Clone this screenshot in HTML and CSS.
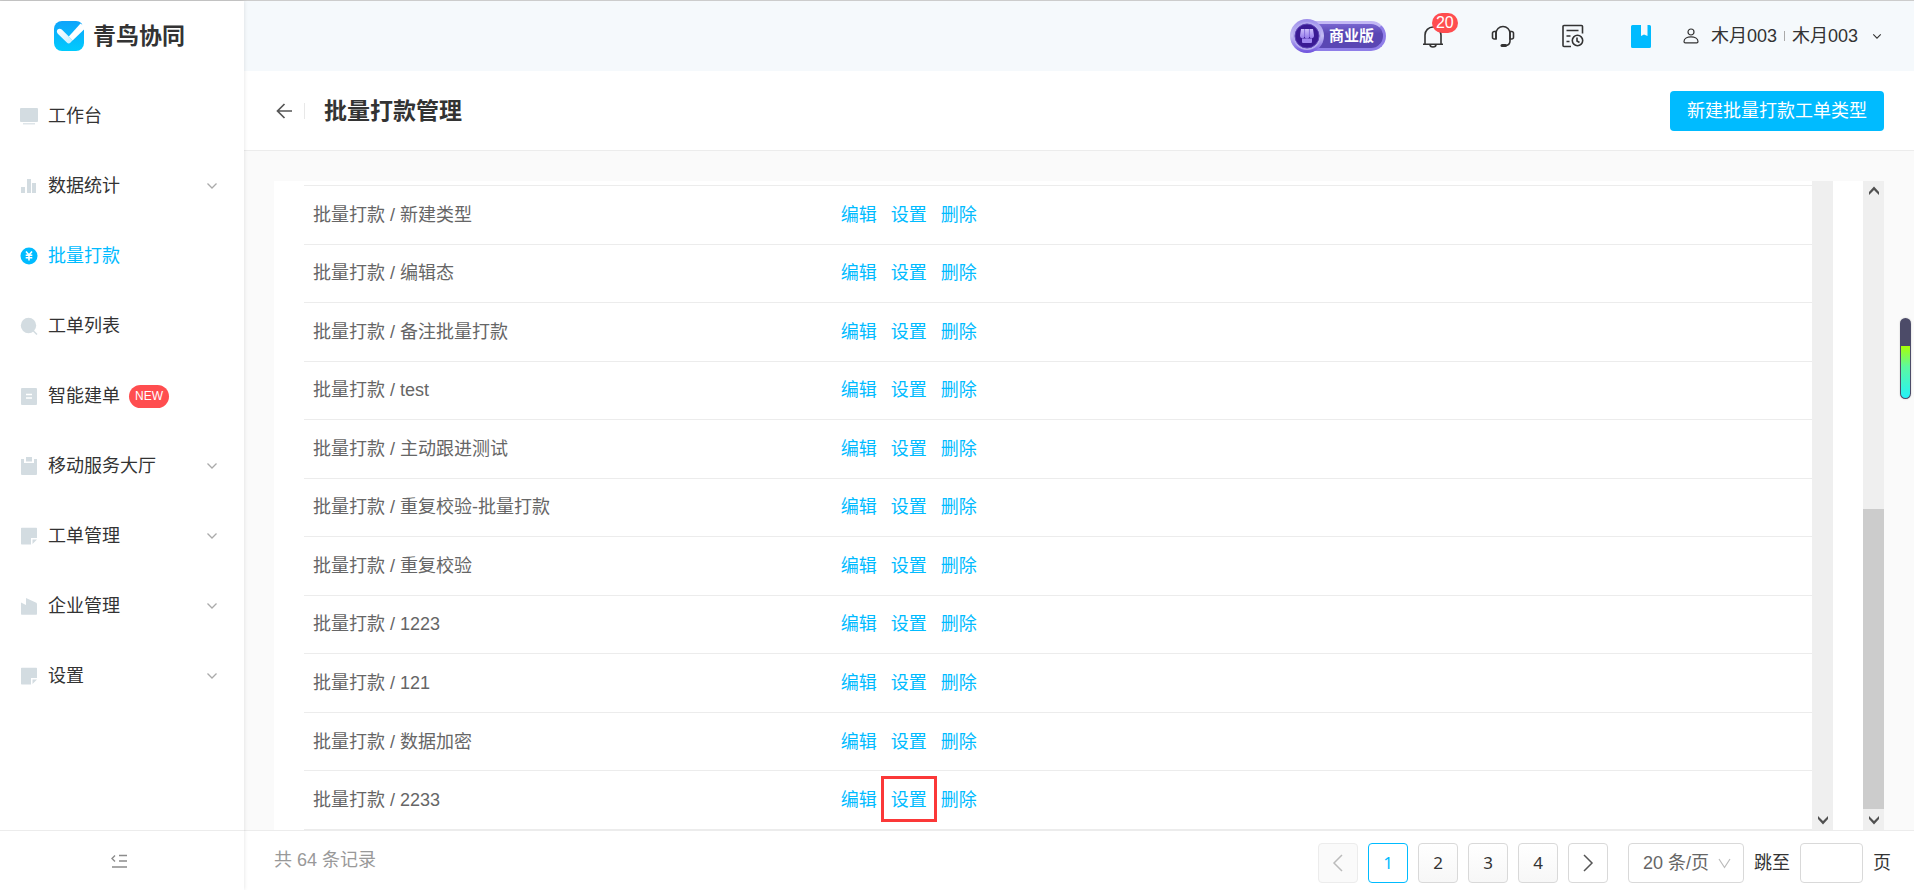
FILE: index.html
```html
<!DOCTYPE html>
<html lang="zh-CN">
<head>
<meta charset="utf-8">
<title>批量打款管理</title>
<link rel="stylesheet" href="styles.css">
</head>
<body>
<svg class="defs" aria-hidden="true">
  <symbol id="chev" viewBox="0 0 12 8"><path d="M1.500 1.500 6 6l4.500-4.500" fill="none" stroke="currentColor" stroke-width="1.300"/></symbol>
  <symbol id="note" viewBox="0 0 18 18"><path d="M1 1.500A.7.700 0 0 1 1.700.800h14.600a.7.700 0 0 1 .7.700V11h-6v6.500H1.700a.7.700 0 0 1-.7-.7z" fill="currentColor"/><path d="M12.500 12.500H17l-4.500 4.500z" fill="currentColor"/></symbol>
  <symbol id="sbdown" viewBox="0 0 12 10"><path d="M1 1v3l5 5.500L11 4V1L6 6z" fill="currentColor"/></symbol>
  <symbol id="sbup" viewBox="0 0 12 10"><path d="M1 9V6l5-5.500L11 6v3L6 4z" fill="currentColor"/></symbol>
</svg>
<div class="app">
  <aside class="sidebar">
    <div class="logo">
      <svg width="30" height="30" viewBox="0 0 30 30" aria-hidden="true">
        <defs>
          <linearGradient id="lg" x1="0" y1="0" x2="0" y2="1"><stop offset="0" stop-color="#0fa4fb"/><stop offset="1" stop-color="#00cbfd"/></linearGradient>
          <linearGradient id="lc" x1="0" y1="0" x2="1" y2="1"><stop offset="0" stop-color="#fff"/><stop offset="1" stop-color="#c8effe"/></linearGradient>
        </defs>
        <path d="M8 0h14c2 0 4 .8 5.300 2.200L30 7v15a8 8 0 0 1-8 8H8a8 8 0 0 1-8-8V8a8 8 0 0 1 8-8z" fill="url(#lg)"/>
        <path d="M26.500 2.500 14.800 15.500l3.800 4L30 8.500V5z" fill="#fff"/>
        <path d="M3.600 8.600c1.300-1.300 3-1.100 4.200 0l7 7 3.800 3.700-2 2.300c-1.200 1.200-2.600 1.200-3.800 0L3.800 12.700c-1.200-1.300-1.200-2.900-.2-4.100z" fill="url(#lc)"/>
      </svg>
      <span>青鸟协同</span>
    </div>
    <nav class="menu">
      <a href="#"><svg class="ic" viewBox="0 0 18 18"><rect x="0" y="1" width="18" height="14" rx="1" fill="currentColor"/><path d="M3 16h12v1.500H3z" fill="currentColor" opacity=".75"/></svg><span>工作台</span></a>
      <a href="#"><svg class="ic" viewBox="0 0 18 18"><path d="M1 10h4v6H1zM7 2h4v14H7zM12 6h4v10h-4z" fill="currentColor"/></svg><span>数据统计</span><svg class="chev"><use href="#chev"/></svg></a>
      <a href="#" class="on"><svg class="ic" viewBox="0 0 18 18"><circle cx="9" cy="9" r="8.500" fill="currentColor"/><path d="M6 4.500 9 8l3-3.500M5.700 8.300h6.600M5.700 10.800h6.600M9 8v5.500" fill="none" stroke="#fff" stroke-width="1.600"/></svg><span>批量打款</span></a>
      <a href="#"><svg class="ic" viewBox="0 0 18 18"><circle cx="8.500" cy="8.500" r="7.700" fill="currentColor"/><path d="m13 13.500 4 4" stroke="currentColor" stroke-width="1.500"/></svg><span>工单列表</span></a>
      <a href="#"><svg class="ic" viewBox="0 0 18 18"><rect x="1" y="1" width="16" height="17" rx="1" fill="currentColor"/><path d="M6 7.500h6M6 11h6" stroke="#fff" stroke-width="1.500"/></svg><span>智能建单</span><em>NEW</em></a>
      <a href="#"><svg class="ic" viewBox="0 0 18 18"><path d="M1 2h3v4h10V2h3v15a1 1 0 0 1-1 1H2a1 1 0 0 1-1-1z" fill="currentColor"/><rect x="6" y="0" width="6" height="4.500" fill="currentColor"/></svg><span>移动服务大厅</span><svg class="chev"><use href="#chev"/></svg></a>
      <a href="#"><svg class="ic"><use href="#note"/></svg><span>工单管理</span><svg class="chev"><use href="#chev"/></svg></a>
      <a href="#"><svg class="ic" viewBox="0 0 18 18"><path d="M1 5.500 6 8V1l10.300 4.700.7 1V17a.7.700 0 0 1-.7.700H1.700A.7.700 0 0 1 1 17z" fill="currentColor"/></svg><span>企业管理</span><svg class="chev"><use href="#chev"/></svg></a>
      <a href="#"><svg class="ic"><use href="#note"/></svg><span>设置</span><svg class="chev"><use href="#chev"/></svg></a>
    </nav>
    <button class="collapse" aria-label="收起菜单"><svg width="16" height="14" viewBox="0 0 16 14"><path d="M4 1.500 1 4.500l3 3M8 1.500h8M8 7h8M1 13h15" fill="none" stroke="currentColor" stroke-width="1.400"/></svg></button>
  </aside>

  <div class="main">
    <header class="topbar">
      <div class="edition">
        <svg width="34" height="36" viewBox="0 0 34 36" aria-hidden="true">
          <defs>
            <linearGradient id="eg" x1="0" y1="0" x2="0" y2="1"><stop offset="0" stop-color="#9d8eea"/><stop offset=".5" stop-color="#c4bdf4"/><stop offset="1" stop-color="#6d51dd"/></linearGradient>
            <linearGradient id="aw" x1="0" y1="0" x2="0" y2="1"><stop offset="0" stop-color="#cdbffb"/><stop offset="1" stop-color="#9379ea"/></linearGradient>
          </defs>
          <circle cx="17" cy="18" r="17" fill="url(#eg)"/><circle cx="17" cy="18" r="14" fill="#b3a9ef"/><circle cx="17" cy="18" r="12" fill="#3a1a94" stroke="#5b42b4"/>
          <path d="M11 11h12l1 6.500a2.300 2.300 0 0 1-4.600.8 2.400 2.400 0 0 1-4.800 0 2.300 2.300 0 0 1-4.600-.8z" fill="url(#aw)"/><path d="M14.600 11v7.500M19.400 11v7.500" stroke="#7a61d3" stroke-width=".8"/><path d="M12 20.500h10V24q0 1-1 1h-8q-1 0-1-1z" fill="#9f88f0"/>
        </svg>
        <span>商业版</span>
      </div>
      <button class="tool bell" aria-label="通知"><svg width="22" height="24" viewBox="0 0 22 24"><path d="M3 20V11a8 8 0 0 1 16 0v9M1 20.300h20M8 20.500c0 3.300 6 3.300 6 0" fill="none" stroke="currentColor" stroke-width="1.600"/></svg><b>20</b></button>
      <button class="tool" aria-label="客服"><svg width="24" height="24" viewBox="0 0 24 24"><g fill="none" stroke="currentColor" stroke-width="1.600"><path d="M5 15V9.500a7 7 0 0 1 14 0V17c0 3-2 4.500-5 4.500"/><path d="M5 7.500H3.500A1.800 1.800 0 0 0 1.500 9.500v3.500a1.800 1.800 0 0 0 2 2H5zM19 7.500h1.500a1.800 1.800 0 0 1 2 2V13a1.800 1.800 0 0 1-2 2H19z"/><path d="M11 21.600h3.500" stroke-width="3" stroke-linecap="round"/></g></svg></button>
      <button class="tool" aria-label="记录"><svg width="22" height="24" viewBox="0 0 22 24"><g fill="none" stroke="currentColor" stroke-width="1.600"><path d="M20.500 9.500V2.500a1 1 0 0 0-1-1H2a1 1 0 0 0-1 1v19a1 1 0 0 0 1 1h7M4.500 6.500h12M4.500 12h4M4.500 17.500h3"/><circle cx="15.500" cy="16.500" r="5.200"/><path d="M15 13.500v3.500l2.500 1.500"/></g></svg></button>
      <button class="tool book" aria-label="帮助手册"><svg width="20" height="23" viewBox="0 0 20 23"><path d="M1.500 0H10v11l3-1.500 3.500 1.500V0h2A1.500 1.500 0 0 1 20 1.500v20a1.500 1.500 0 0 1-1.500 1.500h-17A1.500 1.500 0 0 1 0 21.500v-20A1.500 1.500 0 0 1 1.500 0z" fill="currentColor"/></svg></button>
      <button class="user"><svg width="16" height="16" viewBox="0 0 16 16"><g fill="none" stroke="currentColor" stroke-width="1.200"><circle cx="8" cy="4" r="3"/><path d="M1 13.500C1 7.300 15 7.300 15 13.500c0 1-.5 1.300-1.300 1.300H2.300C1.500 14.800 1 14.500 1 13.500z"/></g></svg><span>木月003</span><i></i><span>木月003</span><svg class="uchev" width="10" height="7"><use href="#chev"/></svg></button>
    </header>

    <div class="titlebar">
      <button class="back" aria-label="返回"><svg width="16" height="16" viewBox="0 0 16 16"><path d="M8.500 1 1.500 8l7 7M1.500 8H16" fill="none" stroke="currentColor" stroke-width="1.700"/></svg></button>
      <h1>批量打款管理</h1>
      <button class="primary">新建批量打款工单类型</button>
    </div>

    <div class="content">
      <div class="card">
        <div class="list">
          <table>
            <tbody>
              <tr><td>批量打款 / 新建类型</td><td><div class="ops"><a href="#">编辑</a><a href="#">设置</a><a href="#">删除</a></div></td></tr>
              <tr><td>批量打款 / 编辑态</td><td><div class="ops"><a href="#">编辑</a><a href="#">设置</a><a href="#">删除</a></div></td></tr>
              <tr><td>批量打款 / 备注批量打款</td><td><div class="ops"><a href="#">编辑</a><a href="#">设置</a><a href="#">删除</a></div></td></tr>
              <tr><td>批量打款 / test</td><td><div class="ops"><a href="#">编辑</a><a href="#">设置</a><a href="#">删除</a></div></td></tr>
              <tr><td>批量打款 / 主动跟进测试</td><td><div class="ops"><a href="#">编辑</a><a href="#">设置</a><a href="#">删除</a></div></td></tr>
              <tr><td>批量打款 / 重复校验-批量打款</td><td><div class="ops"><a href="#">编辑</a><a href="#">设置</a><a href="#">删除</a></div></td></tr>
              <tr><td>批量打款 / 重复校验</td><td><div class="ops"><a href="#">编辑</a><a href="#">设置</a><a href="#">删除</a></div></td></tr>
              <tr><td>批量打款 / 1223</td><td><div class="ops"><a href="#">编辑</a><a href="#">设置</a><a href="#">删除</a></div></td></tr>
              <tr><td>批量打款 / 121</td><td><div class="ops"><a href="#">编辑</a><a href="#">设置</a><a href="#">删除</a></div></td></tr>
              <tr><td>批量打款 / 数据加密</td><td><div class="ops"><a href="#">编辑</a><a href="#">设置</a><a href="#">删除</a></div></td></tr>
              <tr><td>批量打款 / 2233</td><td><div class="ops"><a href="#">编辑</a><a href="#" class="marked">设置</a><a href="#">删除</a></div></td></tr>
            </tbody>
          </table>
        </div>
        <div class="scroll inner"><svg><use href="#sbdown"/></svg></div>
        <div class="scroll"><svg><use href="#sbup"/></svg><div class="thumb"></div><svg><use href="#sbdown"/></svg></div>
      </div>
    </div>

    <footer class="footer">
      <p>共 64 条记录</p>
      <div class="pager">
        <button disabled aria-label="上一页"><svg width="12" height="18" viewBox="0 0 12 18"><path d="M10 1 2 9l8 8" fill="none" stroke="currentColor" stroke-width="1.500"/></svg></button>
        <button class="cur">1</button>
        <button class="num">2</button>
        <button class="num">3</button>
        <button class="num">4</button>
        <button aria-label="下一页"><svg width="12" height="18" viewBox="0 0 12 18"><path d="m2 1 8 8-8 8" fill="none" stroke="currentColor" stroke-width="1.500"/></svg></button>
        <div class="size"><select aria-label="每页条数"><option>20 条/页</option></select><svg width="13" height="11" viewBox="0 0 13 11"><path d="m1 1 5.500 8.500L12 1" fill="none" stroke="currentColor" stroke-width="1.200"/></svg></div>
        <label for="jump">跳至</label><input id="jump" type="text"><span>页</span>
      </div>
    </footer>
  </div>
</div>
<div class="gauge" aria-hidden="true"><div></div></div>
</body>
</html>
```
FILE: styles.css
```css
* { box-sizing: border-box; }

body {
  margin: 0;
  font: 18px/24px "Liberation Sans", "Noto Sans CJK SC", sans-serif;
  color: #333;
  background: #fff;
}

button, select, input {
  margin: 0;
  padding: 0;
  border: 0;
  background: none;
  font: inherit;
  color: inherit;
}

a { color: inherit; text-decoration: none; }
svg { display: block; flex: none; }
.defs { display: none; }

.app {
  display: flex;
  height: 100vh;
  border-top: 1px solid #ccc;
}

/* Sidebar */
.sidebar {
  display: flex;
  flex-direction: column;
  flex: none;
  width: 244px;
  background: #fff;
  box-shadow: 0 0 4px rgba(0, 0, 0, .12);
  z-index: 1;
}

.logo {
  display: flex;
  align-items: center;
  gap: 9px;
  height: 70px;
  padding-left: 54px;
  font-size: 23px;
  font-weight: 700;
}

.menu { flex: 1; padding-top: 10px; }

.menu a {
  display: flex;
  align-items: center;
  height: 70px;
  padding: 0 26px 0 20px;
}

.menu .ic { width: 18px; height: 18px; margin-right: 10px; color: #d3dce1; }
.menu .chev { width: 12px; height: 8px; margin-left: auto; color: #aaa; }
.menu .on, .menu .on .ic { color: #0bf; }

.menu em {
  margin-left: 9px;
  padding: 0 6px;
  border-radius: 12px;
  background: #ff4d4f;
  color: #fff;
  font: 12px/23px "Liberation Sans", sans-serif;
}

.collapse {
  height: 60px;
  padding-left: 111px;
  border-top: 1px solid #ececec;
  color: #8c8c8c;
}

/* Header */
.main { display: flex; flex-direction: column; flex: 1; min-width: 0; }

.topbar {
  display: flex;
  align-items: center;
  justify-content: flex-end;
  height: 70px;
  padding-right: 32px;
  background: #f5f9fc;
}

.edition { display: flex; align-items: center; margin-right: 36px; }
.edition svg { z-index: 1; }

.edition span {
  height: 30px;
  margin-left: -12px;
  padding: 0 9px 0 14px;
  border: 3px solid #8f7ee8;
  border-top-color: #c3b8f4;
  border-radius: 0 15px 15px 0;
  background: linear-gradient(#7865d0, #5a47b4 40%, #5a47b4);
  color: #fff;
  font-size: 15px;
  line-height: 24px;
  font-weight: 700;
}

.tool { position: relative; margin-right: 47px; }
.tool.book { margin-right: 32px; color: #0bf; }

.bell b {
  position: absolute;
  top: -11px;
  left: 10px;
  padding: 0 4px;
  border-radius: 10px;
  background: #ff4d4f;
  color: #fff;
  font: 16px/20px "Liberation Sans", sans-serif;
}

.user { display: flex; align-items: center; }
.user span:first-of-type { margin-left: 12px; }
.user i { width: 1px; height: 10px; margin: 0 7px; background: #aaa; }
.uchev { margin-left: 14px; }

/* Title */
.titlebar {
  display: flex;
  align-items: center;
  height: 80px;
  padding: 0 30px 0 32px;
  border-bottom: 1px solid #ececec;
}

.back {
  padding-right: 12px;
  border-right: 1px solid #e8e8e8;
  color: #555;
}

h1 { margin: 0 auto 0 19px; font-size: 23px; line-height: 32px; }

.primary {
  height: 40px;
  padding: 0 17px;
  border-radius: 4px;
  background: #0bf;
  color: #fff;
}

/* List */
.content {
  display: flex;
  flex: 1;
  min-height: 0;
  padding: 30px 30px 0;
  background: #fafafa;
}

.card { display: flex; flex: 1; background: #fff; }
.list { flex: 1; margin-left: 30px; padding-top: 4px; }

table {
  width: 100%;
  height: 100%;
  table-layout: fixed;
  border-collapse: separate;
  border-spacing: 0;
  border-top: 1px solid #ececec;
}

td {
  padding: 0 9px;
  border-bottom: 1px solid #ececec;
  color: #666;
}

td:first-child { width: 35%; }
.ops { display: flex; gap: 14px; color: #0bf; }
.marked { position: relative; }

.marked::after {
  content: "";
  position: absolute;
  inset: -12px -10px -10px;
  border: 3px solid #fb3838;
}

.scroll {
  display: flex;
  flex-direction: column;
  align-items: center;
  justify-content: flex-end;
  width: 21px;
  padding: 5px 0;
  background: #efefef;
  color: #505050;
}

.scroll svg { width: 12px; height: 10px; }
.scroll.inner { margin-right: 30px; }

.thumb {
  width: 100%;
  height: 47%;
  margin-top: auto;
  margin-bottom: 6px;
  background: #ccc;
}

/* Footer */
.footer {
  display: flex;
  justify-content: space-between;
  height: 60px;
  padding: 12px 23px 0 30px;
  border-top: 1px solid #ececec;
}

.footer p { margin: 5px 0 0; color: #999; }
.pager { display: flex; align-items: center; gap: 10px; height: 40px; }

.pager button {
  display: flex;
  align-items: center;
  justify-content: center;
  width: 40px;
  height: 40px;
  border: 1px solid #d9d9d9;
  border-radius: 4px;
  font: 17px/24px "Noto Sans", sans-serif;
  color: #555;
}

.pager button:disabled { border-color: #ececec; background: #fafafa; color: #bbb; }
.pager .num { background: linear-gradient(#fff, #f7f7f7); color: #333; }
.pager .cur { border-color: #0bf; color: #0bf; }

.size {
  position: relative;
  width: 116px;
  margin-left: 10px;
  color: #666;
}

.size select {
  appearance: none;
  width: 100%;
  height: 40px;
  padding-left: 14px;
  border: 1px solid #d9d9d9;
  border-radius: 4px;
}

.size svg {
  position: absolute;
  top: 15px;
  right: 13px;
  color: #bbb;
  pointer-events: none;
}

.pager input {
  width: 63px;
  height: 40px;
  border: 1px solid #d9d9d9;
  border-radius: 4px;
}

/* Floating gauge */
.gauge {
  position: fixed;
  top: 318px;
  right: 3px;
  width: 11px;
  height: 81px;
  padding: 28px 1px 1px;
  border-radius: 6px;
  background: #4c4b68;
  box-shadow: 0 0 2px rgba(0, 0, 0, .2);
  z-index: 2;
}

.gauge div {
  height: 100%;
  border-radius: 0 0 5px 5px;
  background: linear-gradient(#a8ff04, #5cf8a0 40%, #25f2f8);
}
```
